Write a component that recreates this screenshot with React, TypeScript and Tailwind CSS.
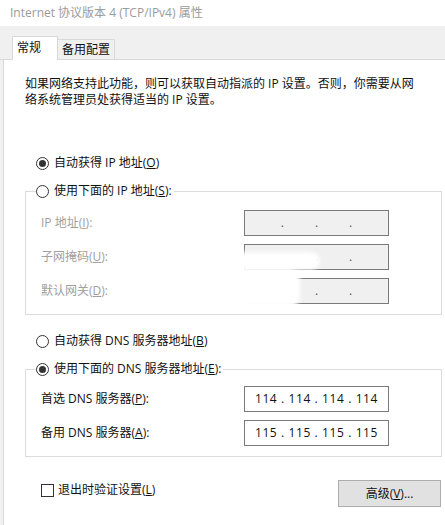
import type { ReactNode } from "react";

/* Windows 10 "Internet 协议版本 4 (TCP/IPv4) 属性" dialog, 常规 tab. */

const font = {
  fontFamily: '"Segoe UI", "Open Sans", "Noto Sans CJK SC", sans-serif',
};

function Radio({ checked }: { checked?: boolean }) {
  return (
    <span className="flex h-[13px] w-[13px] shrink-0 items-center justify-center rounded-full border border-[#333] bg-white">
      {checked && <span className="h-[7px] w-[7px] rounded-full bg-[#333]" />}
    </span>
  );
}

function RadioRow({ checked, children }: { checked?: boolean; children: ReactNode }) {
  return (
    <div className="flex h-[20px] items-center gap-[5px] text-[12px] text-[#111]">
      <Radio checked={checked} />
      <span>{children}</span>
    </div>
  );
}

function IpField({ value, disabled }: { value?: string[]; disabled?: boolean }) {
  return (
    <div
      className={
        "flex h-[26px] w-[145px] items-center justify-center border border-[#7a7a7a] text-[12px] text-[#111] " +
        (disabled ? "bg-[#f0f0f0]" : "bg-white")
      }
    >
      {value ? (
        <span className="tracking-[0.6px]">{value.join(" . ")}</span>
      ) : (
        <span className="flex w-full justify-center gap-[31px] text-[#555]">
          <span>.</span>
          <span>.</span>
          <span>.</span>
        </span>
      )}
    </div>
  );
}

function FieldRow({ label, children, disabled }: { label: ReactNode; children: ReactNode; disabled?: boolean }) {
  return (
    <div className="flex h-[26px] items-center">
      <span className={"w-[203px] text-[12px] " + (disabled ? "text-[#a0a0a0]" : "text-[#111]")}>{label}</span>
      {children}
    </div>
  );
}

export default function App() {
  return (
    <div className="relative flex h-[525px] w-[445px] flex-col overflow-hidden bg-white" style={font}>
      {/* title */}
      <div className="flex h-[26px] shrink-0 items-center pl-[10px] text-[12px] text-[#9b9b9b]">
        Internet 协议版本 4 (TCP/IPv4) 属性
      </div>

      {/* tab strip */}
      <div className="flex h-[34px] shrink-0 items-end border-b border-[#d9d9d9] bg-[#f0f0f0] pl-[12px] text-[12px] text-[#111]">
        <div className="-mb-px flex h-[24px] w-[46px] items-start border-x border-t border-[#d9d9d9] bg-white pl-[4px] pt-[2px]">
          常规
        </div>
        <div className="flex h-[20px] w-[57px] items-center justify-center border-r border-t border-[#d9d9d9] bg-[#f0f0f0] pt-[1px]">
          备用配置
        </div>
      </div>

      {/* panel */}
      <div className="flex flex-1 bg-[#f0f0f0] pl-[3px]">
        <div className="flex flex-1 flex-col border-l border-[#d9d9d9] bg-white">
          <p className="ml-[21px] mt-[16px] w-[400px] text-[12px] leading-[16px] text-[#111]">
            如果网络支持此功能，则可以获取自动指派的 IP 设置。否则，你需要从网络系统管理员处获得适当的 IP 设置。
          </p>

          <div className="ml-[32px] mt-[45px]">
            <RadioRow checked>
              自动获得 IP 地址(<u>O</u>)
            </RadioRow>
          </div>

          <fieldset className="ml-[21px] mt-[8px] w-[417px] border border-[#dcdcdc] pb-[10px] pl-[15px]">
            <legend className="ml-[-5px] pr-[2px]">
              <RadioRow>
                使用下面的 IP 地址(<u>S</u>):
              </RadioRow>
            </legend>
            <div className="mt-[9px] flex flex-col gap-[8px]">
              <FieldRow disabled label={<>IP 地址(<u>I</u>):</>}>
                <IpField disabled />
              </FieldRow>
              <FieldRow disabled label={<>子网掩码(<u>U</u>):</>}>
                <IpField disabled />
              </FieldRow>
              <FieldRow disabled label={<>默认网关(<u>D</u>):</>}>
                <IpField disabled />
              </FieldRow>
            </div>
          </fieldset>

          <div className="ml-[32px] mt-[16px]">
            <RadioRow>
              自动获得 DNS 服务器地址(<u>B</u>)
            </RadioRow>
          </div>

          <fieldset className="ml-[21px] mt-[8px] w-[417px] border border-[#dcdcdc] pb-[10px] pl-[15px]">
            <legend className="ml-[-5px] pr-[2px]">
              <RadioRow checked>
                使用下面的 DNS 服务器地址(<u>E</u>):
              </RadioRow>
            </legend>
            <div className="mt-[7px] flex flex-col gap-[8px]">
              <FieldRow label={<>首选 DNS 服务器(<u>P</u>):</>}>
                <IpField value={["114", "114", "114", "114"]} />
              </FieldRow>
              <FieldRow label={<>备用 DNS 服务器(<u>A</u>):</>}>
                <IpField value={["115", "115", "115", "115"]} />
              </FieldRow>
            </div>
          </fieldset>

          <div className="ml-[37px] mr-[4px] mt-[23px] flex items-start justify-between">
            <label className="flex h-[20px] items-center gap-[4px] text-[12px] text-[#111]">
              <span className="h-[13px] w-[13px] border border-[#333] bg-white" />
              <span>
                退出时验证设置(<u>L</u>)
              </span>
            </label>
            <button
              type="button"
              className="h-[27px] w-[103px] border border-[#adadad] bg-[#e1e1e1] text-[12px] text-[#111]"
            >
              高级(<u>V</u>)...
            </button>
          </div>
        </div>
      </div>

      {/* white smudge that lies over the subnet / gateway fields in the shot */}
      <div className="pointer-events-none absolute left-[150px] top-[252px] h-[18px] w-[170px] rounded-full bg-white blur-[2px]" />
      <div className="pointer-events-none absolute left-[200px] top-[268px] h-[40px] w-[100px] rounded-[12px] bg-white blur-[2px]" />
    </div>
  );
}
